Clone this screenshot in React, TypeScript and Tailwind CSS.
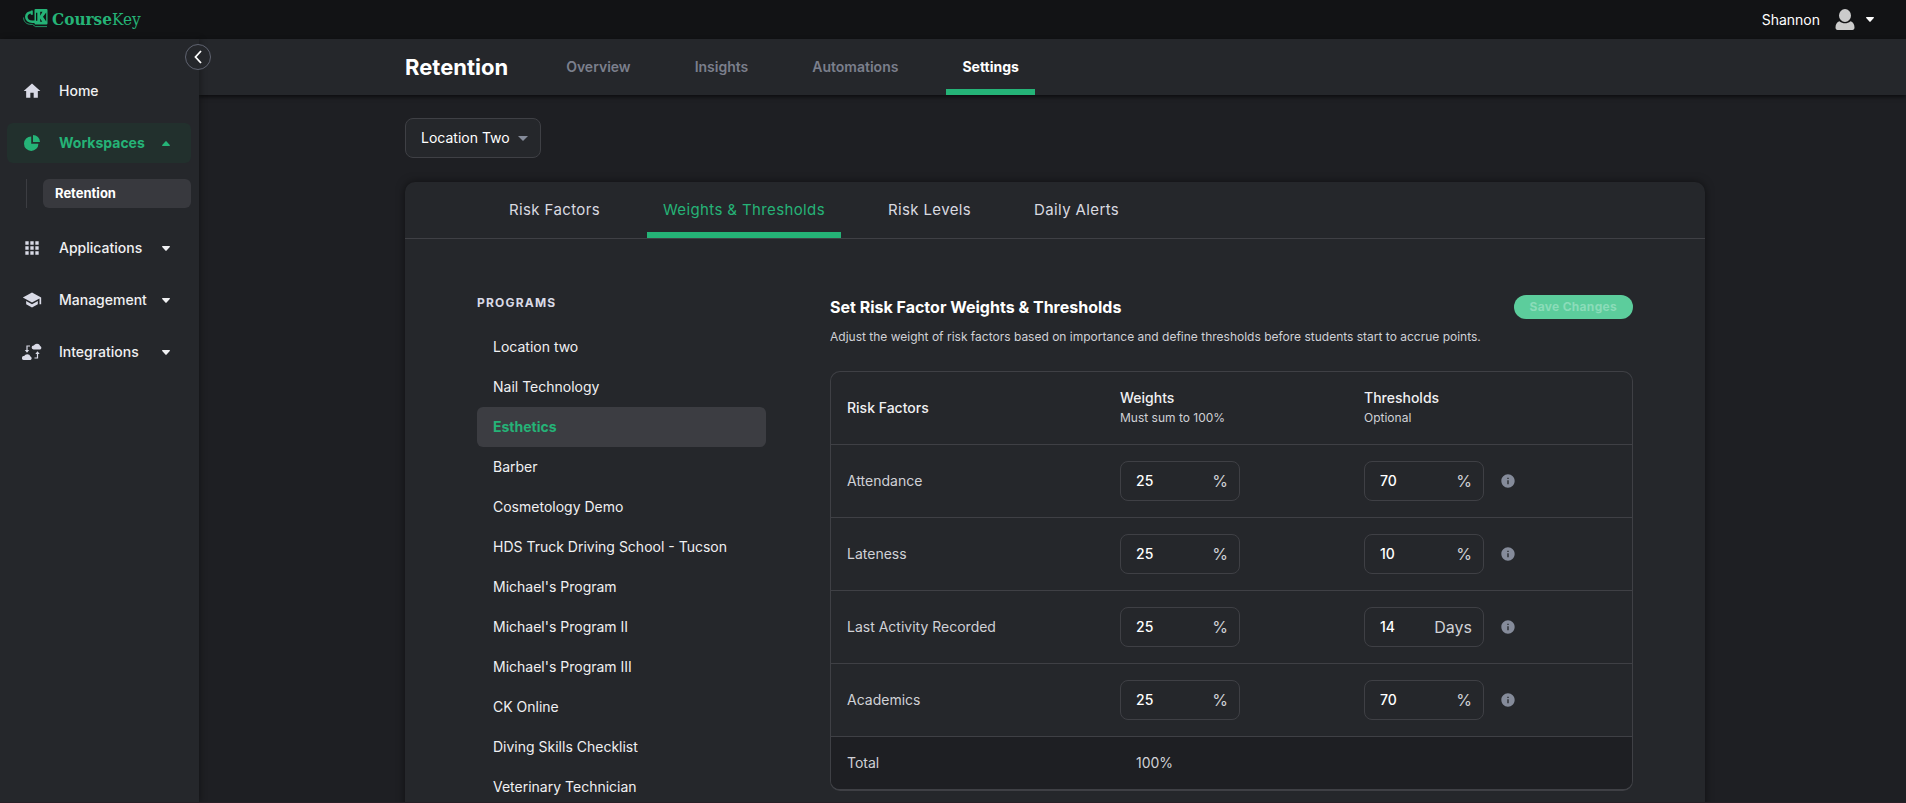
import { useState } from "react";
import type { ReactNode } from "react";
import { MdApps, MdHome, MdInfo, MdSchool } from "react-icons/md";

const programs = [
  "Location two",
  "Nail Technology",
  "Esthetics",
  "Barber",
  "Cosmetology Demo",
  "HDS Truck Driving School - Tucson",
  "Michael's Program",
  "Michael's Program II",
  "Michael's Program III",
  "CK Online",
  "Diving Skills Checklist",
  "Veterinary Technician",
];

const riskFactors = [
  { name: "Attendance", weight: 25, threshold: 70, unit: "%" },
  { name: "Lateness", weight: 25, threshold: 10, unit: "%" },
  { name: "Last Activity Recorded", weight: 25, threshold: 14, unit: "Days" },
  { name: "Academics", weight: 25, threshold: 70, unit: "%" },
];

function Caret({ up = false }: { up?: boolean }) {
  return (
    <svg
      viewBox="0 0 8 5"
      className={up ? "h-[5px] w-2 rotate-180" : "h-[5px] w-2"}
      fill="currentColor"
      aria-hidden="true"
    >
      <path d="M.7 0h6.6c.6 0 .9.7.5 1.100L4.600 4.600a.8.8 0 0 1-1.200 0L.2 1.100C-.2.7.1 0 .7 0z" />
    </svg>
  );
}

function PieIcon() {
  return (
    <svg viewBox="0 0 16 16" className="size-4" fill="currentColor" aria-hidden="true">
      <path d="M7.200 1.500v7.200h7.200A7.200 7.200 0 1 1 7.200 1.500z" />
      <path d="M9 0a7 7 0 0 1 7 7H9z" />
    </svg>
  );
}

function IntegrationsIcon() {
  return (
    <svg viewBox="0 0 20 18" className="h-[18px] w-5" fill="currentColor" aria-hidden="true">
      <path d="M11.500 6.500a2 2 0 0 1 .3-4 3.600 3.600 0 0 1 6.400.4 2 2 0 0 1 .1 3.600z" />
      <path d="M1.800 17a2 2 0 0 1 .3-4 3.600 3.600 0 0 1 6.400.4 2 2 0 0 1 .1 3.600z" />
      <path d="M8 3H5v5" fill="none" stroke="currentColor" strokeWidth="1.200" />
      <path d="M2.800 7h4.400L5 9.700z" />
      <path d="M12.500 15H15.500v-4.500" fill="none" stroke="currentColor" strokeWidth="1.200" />
      <path d="M13.300 11h4.400l-2.200-2.700z" />
    </svg>
  );
}

function Logo() {
  return (
    <a href="#" className="mb-0.5 flex items-center gap-1 text-[#25b377]" aria-label="CourseKey">
      <svg viewBox="0 0 25 19" className="h-[19px] w-[25px]" aria-hidden="true">
        <path
          d="M8.500 3.200C5.500 3.200 3.300 5 3.300 7.800s2.200 4.900 6 4.900H12"
          fill="none"
          stroke="currentColor"
          strokeWidth="2.600"
        />
        <path d="M7.800 1.500h2v4.300h-2z" fill="currentColor" />
        <path
          d="M.6 8.500c0 3.900 2.700 6.900 7.400 6.900h1.500l3 2.200H24"
          fill="none"
          stroke="currentColor"
          strokeWidth=".8"
        />
        <rect x="11.500" y="0" width="13" height="15.500" rx="1" fill="currentColor" />
        <path
          d="M13 3.800h1.300v8H13zM17.200 2.800h2.300l-2.300 4zM17.200 9.500l2 3.300h-2zM23.200 3.500l-3.200 4.300 3.200 4.600z"
          fill="#121315"
        />
      </svg>
      <span className="font-['DejaVu_Serif_Condensed','DejaVu_Serif',serif] text-[17px] leading-5">
        <span className="font-bold">Course</span>Key
      </span>
    </a>
  );
}

function NavItem({
  icon,
  label,
  active = false,
  expandable = true,
}: {
  icon: ReactNode;
  label: string;
  active?: boolean;
  expandable?: boolean;
}) {
  return (
    <button
      type="button"
      className={`flex h-10 w-full items-center rounded-md pr-[21px] pl-[15px] text-sm ${
        active ? "bg-[#22302d] font-bold text-[#25b377]" : "font-medium text-[#f0f0f2]"
      }`}
    >
      <span className={`flex w-5 justify-center ${active ? "" : "text-[#d9dae6]"}`}>{icon}</span>
      <span className="ml-[17px] flex-1 text-left">{label}</span>
      {expandable && <Caret up={active} />}
    </button>
  );
}

function Sidebar() {
  return (
    <aside className="relative z-20 w-[199px] shrink-0 bg-[#25272b] pt-8 pr-2 pl-[7px] shadow-[2px_0_6px_rgba(0,0,0,0.3)]">
      <button
        type="button"
        aria-label="Collapse menu"
        className="absolute top-[5px] -right-3 flex size-[26px] items-center justify-center rounded-full border border-[#5f6370] bg-[#25272b] text-white"
      >
        <svg viewBox="0 0 8 14" className="h-3.5 w-2" fill="none" stroke="currentColor" strokeWidth="1.800" aria-hidden="true">
          <path d="M7 1 1.500 7 7 13" />
        </svg>
      </button>
      <nav className="flex flex-col gap-3">
        <NavItem icon={<MdHome className="size-5" />} label="Home" expandable={false} />
        <div>
          <NavItem icon={<PieIcon />} label="Workspaces" active />
          <div className="mt-4 mb-2 ml-[19px] border-l border-[#3c3d42] pl-4">
            <a
              href="#"
              className="flex h-[29px] items-center rounded-md bg-[#38393e] pl-3 text-[13px] font-bold text-white"
            >
              Retention
            </a>
          </div>
        </div>
        <NavItem icon={<MdApps className="size-5" />} label="Applications" />
        <NavItem icon={<MdSchool className="size-5" />} label="Management" />
        <NavItem icon={<IntegrationsIcon />} label="Integrations" />
      </nav>
    </aside>
  );
}

function UnitInput({ label, value, unit }: { label: string; value: number; unit: string }) {
  return (
    <label className="flex h-10 w-[120px] items-center rounded-lg border border-[#3f4045] pr-[11px] pl-[15px]">
      <input
        type="text"
        aria-label={label}
        defaultValue={value}
        className="w-0 min-w-0 flex-1 bg-transparent text-sm font-medium text-white outline-none"
      />
      <span className="text-base text-[#d0d1d6]">{unit}</span>
    </label>
  );
}

function WeightsTable() {
  return (
    <div className="mt-6 overflow-hidden rounded-[10px] border border-b-2 border-[#3f4045]">
      <table className="w-full table-fixed border-collapse text-left text-sm text-[#d0d1d6]">
        <thead>
          <tr className="h-[72px] border-b border-[#3f4045] text-[#f0f0f2]">
            <th className="w-[273px] px-4 font-medium">Risk Factors</th>
            <th className="w-[244px] px-4 font-medium">
              Weights
              <span className="block text-xs leading-5 font-normal text-[#d0d1d6]">Must sum to 100%</span>
            </th>
            <th className="px-4 font-medium">
              Thresholds
              <span className="block text-xs leading-5 font-normal text-[#d0d1d6]">Optional</span>
            </th>
          </tr>
        </thead>
        <tbody>
          {riskFactors.map((factor) => (
            <tr key={factor.name} className="h-[73px] border-b border-[#3f4045]">
              <td className="px-4">{factor.name}</td>
              <td className="px-4">
                <UnitInput label={`${factor.name} weight`} value={factor.weight} unit="%" />
              </td>
              <td className="px-4">
                <div className="flex items-center gap-4">
                  <UnitInput label={`${factor.name} threshold`} value={factor.threshold} unit={factor.unit} />
                  <button type="button" aria-label={`About ${factor.name}`} className="text-[#858b9a]">
                    <MdInfo className="size-4" />
                  </button>
                </div>
              </td>
            </tr>
          ))}
        </tbody>
        <tfoot>
          <tr className="h-[53px] bg-[#1e1f23]">
            <td className="px-4">Total</td>
            <td className="px-8">100%</td>
            <td />
          </tr>
        </tfoot>
      </table>
    </div>
  );
}

export default function App() {
  const [program, setProgram] = useState("Esthetics");

  return (
    <div className="flex h-screen flex-col overflow-hidden border-b border-[#271f26] bg-[#1e1f23] font-[Inter,sans-serif] text-white">
      <header className="flex h-[39px] shrink-0 items-center justify-between bg-[#121315] pr-8 pl-[23px]">
        <Logo />
        <button type="button" className="flex items-center text-sm">
          Shannon
          <svg viewBox="0 0 20 21" className="ml-[15px] h-[21px] w-5" fill="#cbcbcb" aria-hidden="true">
            <ellipse cx="10" cy="6.500" rx="6" ry="6.500" />
            <path d="M4.500 12.300c3.300 2.700 7.700 2.700 11 0C18 13 19.500 15.500 19.500 18.500c0 1.500-.8 2.500-2 2.500h-15c-1.200 0-2-1-2-2.500 0-3 1.500-5.500 4-6.200z" />
          </svg>
          <span className="ml-[11px]">
            <Caret />
          </span>
        </button>
      </header>

      <div className="flex min-h-0 flex-1">
        <Sidebar />
        <main className="min-w-0 flex-1">
          <div className="relative z-10 bg-[#25272b] pl-[5px] shadow-[0_2px_4px_rgba(0,0,0,0.6)]">
            <div className="mx-auto flex h-14 max-w-[1300px] items-center">
              <h1 className="mr-[42px] text-[22px] font-bold">Retention</h1>
              <nav className="flex h-full gap-8 text-sm font-semibold text-[#7b7f8c]">
                <a href="#" className="flex items-center px-4">Overview</a>
                <a href="#" className="flex items-center px-4">Insights</a>
                <a href="#" className="flex items-center px-4">Automations</a>
                <a href="#" className="flex items-center border-b-6 border-[#25b377] px-4 pt-1.5 font-bold text-white">
                  Settings
                </a>
              </nav>
            </div>
          </div>

          <div className="pt-[23px] pl-[5px]">
            <div className="mx-auto max-w-[1300px]">
              <div className="relative inline-flex items-center">
                <select
                  aria-label="Location"
                  className="h-10 appearance-none rounded-lg border border-[#3f4045] bg-[#25272b] pr-[30px] pl-[15px] text-sm text-white"
                >
                  <option>Location Two</option>
                </select>
                <svg viewBox="0 0 10 5" className="pointer-events-none absolute right-[13px] h-[5px] w-2.5" fill="#858b9a" aria-hidden="true">
                  <path d="M0 0h10L5 5z" />
                </svg>
              </div>

              <section className="mt-6 rounded-t-[10px] bg-[#25272b] shadow-[0_0_8px_rgba(0,0,0,0.5)]">
                <nav className="flex h-[57px] gap-[31px] border-b border-[#3f4045] px-[88px] text-[15px] tracking-wide text-[#d9dae0]">
                  <a href="#" className="flex items-center px-4">Risk Factors</a>
                  <a href="#" className="flex items-center border-b-6 border-[#25b377] px-4 pt-1.5 text-[#25b377]">
                    Weights &amp; Thresholds
                  </a>
                  <a href="#" className="flex items-center px-4">Risk Levels</a>
                  <a href="#" className="flex items-center px-4">Daily Alerts</a>
                </nav>

                <div className="flex gap-16 px-[72px] pt-14">
                  <div className="w-1/4 shrink-0">
                    <h2 className="text-xs leading-4 font-bold tracking-widest text-[#d9dae6]">PROGRAMS</h2>
                    <ul className="mt-4">
                      {programs.map((name) => (
                        <li key={name}>
                          <button
                            type="button"
                            onClick={() => setProgram(name)}
                            className={`h-10 w-full rounded-md px-4 text-left text-sm ${
                              name === program ? "bg-[#3c3d42] font-bold text-[#25b377]" : "text-[#f0f0f2]"
                            }`}
                          >
                            {name}
                          </button>
                        </li>
                      ))}
                    </ul>
                  </div>

                  <div className="min-w-0 flex-1">
                    <div className="flex items-center justify-between">
                      <h2 className="text-base leading-6 font-bold">Set Risk Factor Weights &amp; Thresholds</h2>
                      <button
                        type="button"
                        disabled
                        className="h-6 rounded-full bg-[#5ccd9c] px-4 text-xs font-bold tracking-wide text-[#8bdcb9]"
                      >
                        Save Changes
                      </button>
                    </div>
                    <p className="mt-2 text-xs leading-5 text-[#d0d1d6]">
                      Adjust the weight of risk factors based on importance and define thresholds before students start to
                      accrue points.
                    </p>
                    <WeightsTable />
                  </div>
                </div>
              </section>
            </div>
          </div>
        </main>
      </div>
    </div>
  );
}
